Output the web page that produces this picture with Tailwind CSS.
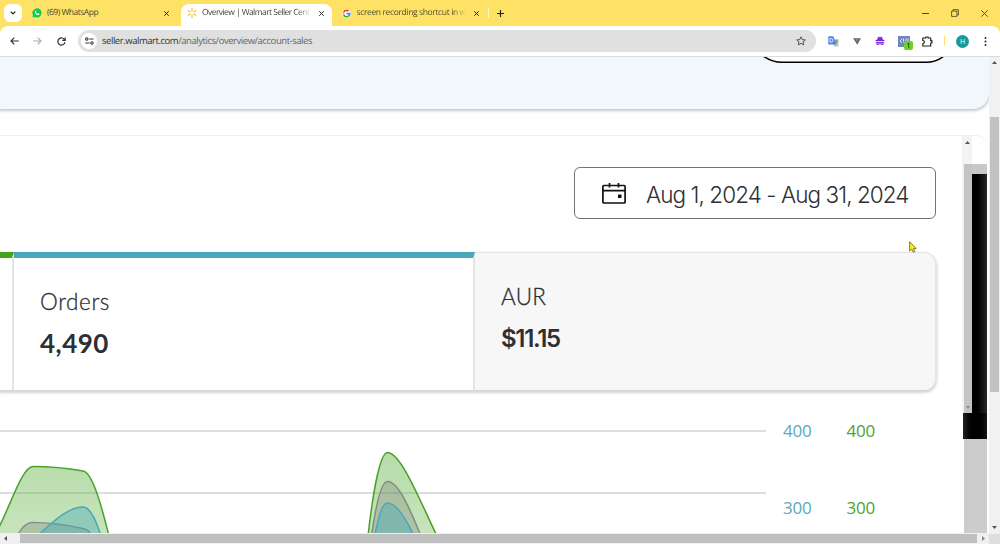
<!DOCTYPE html>
<html lang="en">
<head>
    <meta charset="UTF-8">
    <meta name="viewport" content="width=device-width, initial-scale=1.0">
    <title>Overview | Walmart Seller Center</title>
    <script src="https://cdn.jsdelivr.net/npm/@tailwindcss/browser@4"></script>
</head>
<body class="w-[1000px] h-[544px] overflow-hidden flex flex-col bg-white font-['Open_Sans',sans-serif] text-[#2e2f32]">
    <!-- Tab strip -->
    <header class="h-[26px] shrink-0 bg-[#fde265] flex text-[8.5px] text-[#4c4630] [text-rendering:geometricPrecision]">
        <div class="w-[181px] flex items-center pl-1">
            <button class="w-[18px] h-[18px] rounded-md bg-white flex items-center justify-center">
                <svg class="w-[6px] h-[4px]" viewBox="0 0 6 4" fill="none" stroke="#222" stroke-width="1.3"><path d="M.7.6 3 2.9 5.3.6"/></svg>
            </button>
            <svg class="w-[10px] h-[10px] ml-[9.5px]" viewBox="0 0 10 10">
                <path d="M.4 9.6 1 7.2A4.6 4.6 0 1 1 2.9 9Z" fill="#17c950"/>
                <path d="M3.2 2.7c.6-.6.9.1 1.1.7.1.3-.5.6-.4.8.4.8 1 1.3 1.8 1.6.3.1.6-.7.8-.6.6.2 1.2.5 1 .9-.3 1-1.5 1.2-2.5.7C3.7 6.2 2.3 4.2 3.2 2.7Z" fill="#fff"/>
            </svg>
            <span class="ml-[5.5px] w-[117px] tracking-[-0.5px]">(69) WhatsApp</span>
            <svg class="w-[5px] h-[5px]" viewBox="0 0 5 5" stroke="#222" stroke-width="1"><path d="m.3.3 4.4 4.4M4.7.3.3 4.7"/></svg>
        </div>
        <div class="w-[151px] mt-[4px] pb-[4px] rounded-t-lg bg-white flex items-center pl-[6px] text-[#3c3c3c]">
            <svg class="w-[10px] h-[10px] shrink-0" viewBox="0 0 10 10" stroke="#f9c440" stroke-width="1.3" stroke-linecap="round">
                <path d="M5 .6v2.3M5 7.1v2.3M1.2 2.8l2 1.1M6.8 6.100l2 1.100M1.2 7.200l2-1.100M6.800 3.900l2-1.100"/>
            </svg>
            <span class="ml-[5px] w-[109px] whitespace-nowrap tracking-[-0.57px] bg-linear-to-r from-[#3c3c3c] from-88% to-transparent bg-clip-text text-transparent">Overview | Walmart Seller Cent</span>
            <svg class="w-[5px] h-[5px] ml-[8px]" viewBox="0 0 5 5" stroke="#222" stroke-width="1"><path d="m.3.3 4.4 4.4M4.7.3.3 4.7"/></svg>
        </div>
        <div class="flex items-center pl-[10px]">
            <svg class="w-[9px] h-[9px] shrink-0" viewBox="0 0 18 18">
                <circle cx="9" cy="9" r="9" fill="#fff"/>
                <path d="M17 7.5H9v3.3h4.5A4.8 4.8 0 0 1 11.9 13l2.7 2.2C16.5 13.5 17.5 10.7 17 7.5Z" fill="#4285f4"/>
                <path d="M1.9 12.5A8.2 8.2 0 0 0 14.6 15.2L11.9 13a5 5 0 0 1-7.2-2.5Z" fill="#34a853"/>
                <path d="M1.9 5.4a8.2 8.2 0 0 0 0 7.1l2.8-2a4.8 4.8 0 0 1 0-3.1Z" fill="#fbbc05"/>
                <path d="M9 .8a8.2 8.2 0 0 0-7.1 4.6l2.8 2A5 5 0 0 1 12.2 5.2l2.4-2.4A8.3 8.3 0 0 0 9 .8Z" fill="#ea4335"/>
            </svg>
            <span class="ml-[5.5px] w-[109px] whitespace-nowrap tracking-[-0.37px] bg-linear-to-r from-[#4c4630] from-88% to-transparent bg-clip-text text-transparent">screen recording shortcut in wi</span>
            <svg class="w-[5px] h-[5px] ml-[8px]" viewBox="0 0 5 5" stroke="#222" stroke-width="1"><path d="m.3.3 4.4 4.4M4.7.3.3 4.7"/></svg>
            <span class="w-px h-[10px] bg-[#fff6cb] ml-[9px]"></span>
            <svg class="w-[7px] h-[7px] ml-[8px]" viewBox="0 0 7 7" stroke="#222" stroke-width="1.2"><path d="M3.5 0v7M0 3.5h7"/></svg>
        </div>
        <div class="ml-auto flex items-center pr-[12px]">
            <svg class="w-[7px] h-[7px]" viewBox="0 0 7 7" stroke="#444"><path d="M0 3.5h7"/></svg>
            <svg class="w-[8px] h-[8px] ml-[22px]" viewBox="0 0 8 8" fill="none" stroke="#554d2a" stroke-width=".9"><path d="M.6 2.1h5.3v5.3H.6zM2 2V.7h5.4V6H6"/></svg>
            <svg class="w-[7px] h-[7px] ml-[22.5px]" viewBox="0 0 7 7" stroke="#444" stroke-width=".9"><path d="m.3.3 6.4 6.4M6.7.3.3 6.7"/></svg>
        </div>
    </header>

    <!-- Toolbar -->
    <div class="h-[31px] shrink-0 bg-[#fde265]">
        <div class="h-full rounded-t-lg bg-white border-b border-[#dcdcdc] flex items-center pl-[10px] pr-[13px]">
            <svg class="w-[9px] h-[8px]" viewBox="0 0 9 8" fill="none" stroke="#333" stroke-width="1.2"><path d="M8.8 4H1M4.3.7 1 4l3.3 3.3"/></svg>
            <svg class="w-[9px] h-[8px] ml-[14px]" viewBox="0 0 9 8" fill="none" stroke="#aaa" stroke-width="1.1"><path d="M.2 4H8M4.7.7 8 4 4.7 7.3"/></svg>
            <svg class="w-[9px] h-[9px] ml-[15px]" viewBox="0 0 9 9" fill="none" stroke="#333" stroke-width="1.2"><path d="M7.7 3A3.6 3.6 0 1 0 8 5.2M8.2.4v2.9H5.3"/></svg>
            <div class="ml-[12px] w-[738px] h-[22px] rounded-full bg-[#e0e0e0] flex items-center pl-[3px] pr-[10px] text-[9.5px] text-[#666] [text-rendering:geometricPrecision]">
                <span class="w-[16px] h-[16px] rounded-full bg-white flex items-center justify-center">
                    <svg class="w-[9px] h-[8px]" viewBox="0 0 9 8" fill="none" stroke="#333" stroke-width="1.1"><circle cx="1.8" cy="2" r="1.2"/><path d="M4.3 2h4.2M.4 6h4.2"/><circle cx="7" cy="6" r="1.2"/></svg>
                </span>
                <span class="ml-[5px] mt-px whitespace-nowrap tracking-[-0.45px]"><span class="text-[#333]">seller.walmart.com</span>/analytics/overview/account-sales</span>
                <svg class="w-[10px] h-[10px] ml-auto" viewBox="0 0 10 10" fill="none" stroke="#444" stroke-width=".9" stroke-linejoin="round"><path d="m5 .8 1.25 2.8 3.05.3L7 5.9l.7 3L5 7.3 2.3 8.9l.7-3L.7 3.9l3.05-.3Z"/></svg>
            </div>
            <svg class="w-[11px] h-[11px] ml-[12px]" viewBox="0 0 11 11">
                <path d="M4 3h6.5v7.5H6Z" fill="#bfc5cc"/><path d="M.3.3h5l3 8.2h-8Z" fill="#4a86e8"/>
                <path d="M2 2.5h1.2a1.8 1.8 0 0 1 0 3.6H2Z" fill="none" stroke="#fff" stroke-width=".8"/>
                <path d="M6.3 5h3.5M8 4v1M9.2 5c-.3 1.6-1.1 2.6-2.3 3.4" fill="none" stroke="#66727f" stroke-width=".7"/>
            </svg>
            <svg class="w-[8px] h-[7px] ml-[14px]" viewBox="0 0 8 7"><path d="M0 .3h8L4.3 6.8Z" fill="#666"/><path d="M2 .3h4L4.2 4Z" fill="#888"/></svg>
            <svg class="w-[10px] h-[10px] ml-[14px]" viewBox="0 0 10 10" fill="#8127db"><path d="M2.3 3.6 3 .8 5 1.3 7 .8l.7 2.8 1.9.6v.9H.4v-.9ZM.8 5.7h8.4v1H.8Z"/><circle cx="3" cy="7.6" r="1.7"/><circle cx="7" cy="7.6" r="1.7"/><circle cx="3" cy="7.7" r=".6" fill="#fff"/><circle cx="7" cy="7.7" r=".6" fill="#fff"/></svg>
            <div class="relative ml-[13px] w-[12px] h-[11px] bg-[#6f87bd]">
                <svg class="w-[12px] h-[11px]" viewBox="0 0 12 11" fill="none" stroke="#fff" stroke-width=".8"><path d="M4 3 2 5l2 2M5.5 2.5v3L7 7.5M8 2.5v3M10 2.5v3"/></svg>
                <span class="absolute left-[6px] top-[5px] w-[9px] h-[9px] rounded-[2px] bg-[#6bd02d] text-[7px] leading-[9px] text-center text-black">1</span>
            </div>
            <svg class="w-[11px] h-[11px] ml-[12px]" viewBox="0 0 11 11" fill="none" stroke="#222" stroke-width="1.2" stroke-linejoin="round"><path d="M.8 2h3V1h2.4v1h2.5v2.7h1.2V7H8.7v3H.8V7.8c2.1-.2 2.1-3.2 0-3.4Z"/></svg>
            <span class="w-px h-[10px] bg-[#fbe36f] ml-[11px]"></span>
            <span class="w-[13px] h-[13px] rounded-full bg-[#139c99] text-white text-[7px] leading-[13px] text-center ml-[11px]">H</span>
            <svg class="w-[3px] h-[9px] ml-auto" viewBox="0 0 3 9" fill="#222"><circle cx="1.5" cy="1" r=".95"/><circle cx="1.5" cy="4.5" r=".95"/><circle cx="1.5" cy="8" r=".95"/></svg>
        </div>
    </div>

    <div class="flex-1 flex min-h-0">
        <!-- Page -->
        <div class="w-[989px] flex flex-col">
            <main class="h-[476px] overflow-hidden flex flex-col font-[Lato,sans-serif]">
                <section class="h-[52px] shrink-0 bg-[#f2f7fc] rounded-br-[16px] shadow-[0_1px_3px_1px_rgba(0,0,0,0.22)] flex justify-end pr-[43px]">
                    <svg class="w-[186px] h-[7px]" viewBox="0 0 186 7"><path d="M3-1C9 3 15 5.3 22 5.3H166C173 5.3 179 3 184-1Z" fill="#fff" stroke="#000" stroke-width="1.5"/></svg>
                </section>

                <section class="mt-[26px] h-[398px] shrink-0 border-t border-[#efefef] rounded-tr-[14px] flex">
                    <div class="w-[962px]">
                        <div class="flex justify-end pt-[31px] pr-[26px]">
                            <button class="w-[362px] h-[52px] border-[1.5px] border-[#747474] rounded-md flex items-center pl-[27px] font-[Inter,sans-serif] text-[22.5px] font-light whitespace-nowrap">
                                <svg class="w-[24px] h-[21px] shrink-0" viewBox="0 0 24 21" fill="none" stroke="#111" stroke-width="1.7"><rect x=".9" y="2.5" width="22.2" height="17.5" rx="1"/><path d="M.8 7.6h22.4M7.5 0v4.5M16.5 0v4.5"/><path d="M16 11.5h3.5V15H16z" fill="#111" stroke="none"/></svg>
                                <span class="ml-[20px] mt-[3px] tracking-[-0.93px]">Aug 1, 2024 - Aug 31, 2024</span>
                            </button>
                        </div>

                        <!-- Metric cards -->
                        <div class="mt-[33px] w-[936px] h-[138px] flex rounded-r-[12px] shadow-[0_2px_3px_1px_rgba(0,0,0,0.17)]">
                            <div class="w-[14px] border-t-[6px] border-t-[#45a31d] border-r-2 border-r-[#e3e4e5] bg-white"></div>
                            <div class="w-[461px] border-t-[6px] border-t-[#4ca6b9] border-r-2 border-r-[#e3e4e5] bg-white pl-[26px] pt-[30px]">
                                <p class="text-[22.5px] leading-[28px] font-light tracking-[0.6px] [-webkit-text-stroke:0.3px]">Orders</p>
                                <p class="mt-[14px] text-[26px] leading-[27px] font-bold tracking-[0.5px]">4,490</p>
                            </div>
                            <div class="flex-1 bg-[#f7f7f7] border-t border-r border-[#e3e4e5] rounded-r-[12px] pl-[26px] pt-[30px]">
                                <p class="text-[22.5px] leading-[28px] font-light tracking-[0.3px] [-webkit-text-stroke:0.3px]">AUR</p>
                                <p class="mt-[15px] font-[Inter,sans-serif] text-[24px] leading-[26px] font-semibold tracking-[-1.3px]">$11.15</p>
                            </div>
                        </div>

                        <!-- Chart -->
                        <div class="flex mt-[3px]">
                            <svg class="w-[766px] h-[140px]" viewBox="0 393 766 140" fill="none">
                                <defs>
                                    <linearGradient id="green" x1="0" y1="450" x2="0" y2="540" gradientUnits="userSpaceOnUse">
                                        <stop stop-color="#54ad35" stop-opacity=".43"/><stop offset="1" stop-color="#70b84f" stop-opacity=".38"/>
                                    </linearGradient>
                                </defs>
                                <path d="M0 431H766M0 493H766" stroke="#dedede" stroke-width="1.8"/>
                                <g stroke-width="1.5">
                                    <path d="M-2 529C10 507 22 466.5 33 466.5C53 466.5 72 469 83 471C93 472 103 512 109 536H-2Z" fill="url(#green)" stroke="#48a128"/>
                                    <path d="M17 536C22 527 27 522.5 32 522.5C52 522.5 72 526 83 528.5C88 529.5 91 534 92 536Z" fill="#777" fill-opacity=".3" stroke="#87918a"/>
                                    <path d="M37 536C53 522 68 507 83 507C91 507 98 526 101 536Z" fill="#3ba6ba" fill-opacity=".38" stroke="#4ca6b9"/>
                                    <path d="M368 536C373 492 380 452.5 387.5 452.5C401 452.5 420 501 437 536Z" fill="url(#green)" stroke="#48a128"/>
                                    <path d="M371.5 536C376 504 381 481.5 387.5 481.5C399 481.5 411 512 421 536Z" fill="#777" fill-opacity=".3" stroke="#818b83"/>
                                    <path d="M374.5 536C379 516 382 503 387.5 503C397 503 407 521 414 536Z" fill="#3ba6ba" fill-opacity=".38" stroke="#4ca6b9"/>
                                </g>
                            </svg>
                            <div class="pl-[17px] pt-[26px] flex gap-[35px] font-['Open_Sans',sans-serif] text-[17px] leading-[24px] tracking-[-0.2px]">
                                <div class="flex flex-col gap-[53px] text-[#5aa9b8]"><span>400</span><span>300</span></div>
                                <div class="flex flex-col gap-[53px] text-[#4da331]"><span>400</span><span>300</span></div>
                            </div>
                        </div>
                    </div>

                    <!-- Inner scrollbar and the dark strip beside it -->
                    <div class="w-[25px] flex flex-col">
                        <div class="h-[277px] flex">
                            <div class="w-[10px] bg-[#f3f3f3] flex flex-col items-center">
                                <svg class="w-[5px] h-[3px] mt-[5px]" viewBox="0 0 5 3" fill="#555"><path d="M0 3 2.5 0 5 3Z"/></svg>
                                <div class="mt-[20px] flex-1 w-[8px] ml-[2px] bg-[#c4c4c4] flex flex-col justify-end items-center pb-[4px]">
                                    <svg class="w-[4px] h-[3px]" viewBox="0 0 4 3" fill="#888"><path d="M0 0h4L2 3Z"/></svg>
                                </div>
                            </div>
                            <div class="flex-1 mt-[28px] border-t-[10px] border-[#c8c8c8] bg-linear-to-r from-black via-[#080808] to-[#292929]"></div>
                        </div>
                        <div class="h-[26px] ml-px bg-linear-to-r from-[#222] via-black to-[#151515]"></div>
                        <div class="flex-1 ml-[2px] bg-[#ccc]"></div>
                    </div>
                </section>
            </main>
            <div class="flex-1 bg-[#f0f0f0] flex items-center pl-[4px] pr-[4px]">
                <svg class="w-[3px] h-[5px]" viewBox="0 0 3 5" fill="#555"><path d="M3 0v5L0 2.5Z"/></svg>
                <div class="ml-[13px] w-[957px] h-[9px] bg-[#bfbfbf]"></div>
                <svg class="w-[3px] h-[5px] ml-auto" viewBox="0 0 3 5" fill="#888"><path d="M0 0v5l3-2.5Z"/></svg>
            </div>
        </div>

        <!-- Window scrollbar -->
        <div class="flex-1 bg-[#f1f1f1] flex flex-col items-center">
            <svg class="w-[5px] h-[3px] mt-[4px]" viewBox="0 0 5 3" fill="#555"><path d="M0 3 2.5 0 5 3Z"/></svg>
            <div class="mt-[53px] w-[9px] h-[275px] bg-[#c1c1c1]"></div>
            <svg class="w-[5px] h-[3px] mt-[134px]" viewBox="0 0 5 3" fill="#555"><path d="M0 0h5L2.5 3Z"/></svg>
            <div class="mt-auto h-[10px] w-full bg-[#dedede]"></div>
        </div>
    </div>

    <!-- Mouse pointer -->
    <svg class="absolute left-[909px] top-[241px] w-[8px] h-[12px]" viewBox="0 0 8 12"><path d="M.6.7v9.3l2.1-1.8 1.5 3 1.6-.8-1.3-2.8h2.8Z" fill="#f3ef19" stroke="#65651d" stroke-width=".8"/></svg>
</body>
</html>
